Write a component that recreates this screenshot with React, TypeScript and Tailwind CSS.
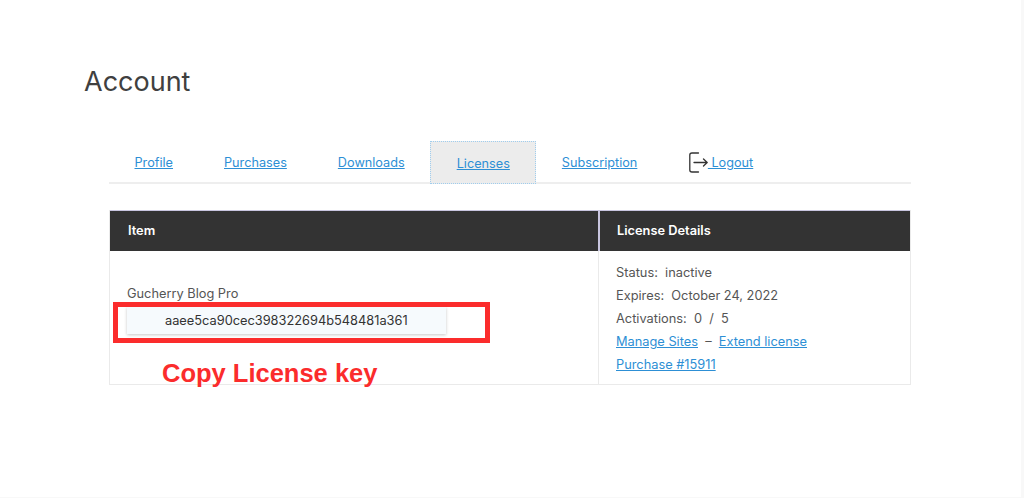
export default function App() {
  const link = "text-[#2d8fd5] underline";
  const tabs = ["Profile", "Purchases", "Downloads", "Licenses", "Subscription"];
  return (
    <div className="w-[1024px] h-[498px] bg-white border-r-[3px] border-b border-[#f8f8f8] overflow-hidden pt-[65px] font-['Inter',sans-serif] text-[12.8px] text-[#555]">
      <h1 className="ml-[84px] h-[76px] pt-[1px] text-[27px] leading-[32px] text-[#404040] font-normal">Account</h1>
      <div className="ml-[109px] w-[802px]">
        <div className="flex h-[43px] border-b-2 border-[#eeeeee] text-[12.7px]">
          {tabs.map((t) => (
            <div
              key={t}
              className={
                t === "Licenses"
                  ? "h-[43px] px-[25.5px] pt-[3px] flex items-center bg-[#ececec] border border-dotted border-[#9fcdee]"
                  : "h-[41px] px-[25.5px] pt-[3px] flex items-center"
              }
            >
              <a className={link}>{t}</a>
            </div>
          ))}
          <div className="h-[41px] pl-[26px] pt-[2px] flex items-center">
            <svg width="19" height="21" viewBox="0 0 19 21" fill="none" stroke="#333" strokeWidth="1.3" strokeLinecap="round" strokeLinejoin="round">
              <path d="M9.5 1H3C1.7 1 .8 1.8.8 3v15c0 1.2.9 2 2.2 2h6.5" />
              <path d="M5 10.5h13M14.5 7l3.7 3.5-3.7 3.5" />
            </svg>
            <a className={link + " whitespace-pre pt-[1px]"}> Logout</a>
          </div>
        </div>
        <div className="relative mt-[26px] border border-t-0 border-[#eaeaea] grid grid-cols-[488px_1fr]">
          <div className="h-[41px] bg-[#333333] border-t border-[#c9c6e0] flex items-center pl-[18px] text-white font-semibold">Item</div>
          <div className="h-[41px] bg-[#333333] border-t border-l-2 border-[#c9c6e0] flex items-center pl-[17px] text-white font-semibold">License Details</div>
          <div className="h-[133px] pl-[17px] pt-[35px]">
            <div className="leading-[16px]">Gucherry Blog Pro</div>
            <div className="mt-[5px] w-[319px] h-[27px] bg-[#f6fafd] shadow-[0_1px_3px_rgba(0,0,0,0.22)] flex items-center pl-[38px] text-[#333]">aaee5ca90cec398322694b548481a361</div>
          </div>
          <div className="h-[133px] border-l border-[#eaeaea] pl-[17px] pt-[10px] leading-[23px]">
            <div className="whitespace-pre">Status:  inactive</div>
            <div className="whitespace-pre">Expires:  October 24, 2022</div>
            <div className="whitespace-pre">Activations:  0  /  5</div>
            <div className="whitespace-pre"><a className={link}>Manage Sites</a>  –  <a className={link}>Extend license</a></div>
            <div><a className={link}>Purchase #15911</a></div>
          </div>
          <div className="absolute left-[3px] top-[92px] w-[377px] h-[41px] border-[5px] border-[#fb2c2c]" />
          <div className="absolute left-[52px] top-[148px] text-[25.5px] leading-[30px] font-bold text-[#fb2c2c] font-['Liberation_Sans',sans-serif] whitespace-nowrap">Copy License key</div>
        </div>
      </div>
    </div>
  );
}
